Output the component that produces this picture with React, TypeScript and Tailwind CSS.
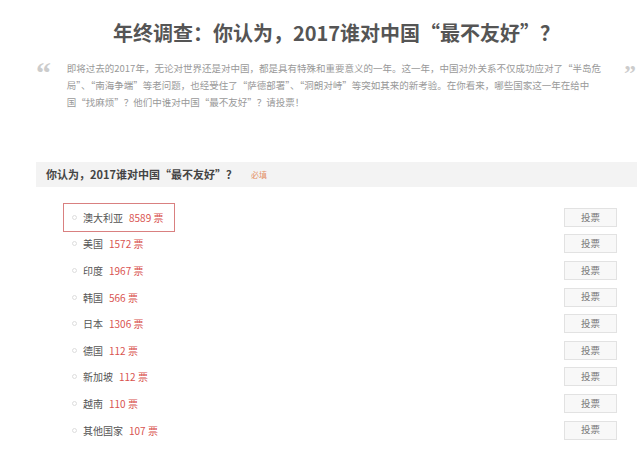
import React from 'react';

type Option = { name: string; votes: number };

const options: Option[] = [
  { name: '澳大利亚', votes: 8589 },
  { name: '美国', votes: 1572 },
  { name: '印度', votes: 1967 },
  { name: '韩国', votes: 566 },
  { name: '日本', votes: 1306 },
  { name: '德国', votes: 112 },
  { name: '新加坡', votes: 112 },
  { name: '越南', votes: 110 },
  { name: '其他国家', votes: 107 },
];

const lines = [
  '即将过去的2017年，无论对世界还是对中国，都是具有特殊和重要意义的一年。这一年，中国对外关系不仅成功应对了“半岛危',
  '局”、“南海争端”等老问题，也经受住了“萨德部署”、“洞朗对峙”等突如其来的新考验。在你看来，哪些国家这一年在给中',
  '国“找麻烦”？他们中谁对中国“最不友好”？请投票！',
];

const App: React.FC = () => {
  return (
    <div
      lang="zh-CN"
      className="w-[637px] h-[456px] bg-white overflow-hidden font-['Noto_Sans_CJK_SC',sans-serif]"
    >
      <div className="pl-[36px]">
        <h1 className="pt-[19px] text-center text-[20px] leading-[28px] font-bold text-[#555]">
          年终调查：你认为，2017谁对中国“最不友好”？
        </h1>

        <div className="flex mt-[11px] h-[104px]">
          <span className="w-[31px] text-[30px] leading-[30px] font-bold text-[#ccc] font-['Liberation_Serif',serif]">
            “
          </span>
          <div className="w-[561px] pt-[2px] text-[9.5px] leading-[17px] text-[#999]">
            {lines.map((l) => (
              <div key={l} className="whitespace-nowrap">
                {l}
              </div>
            ))}
          </div>
          <span className="ml-auto mr-[1px] text-[24px] leading-[30px] font-bold text-[#ccc] font-['Liberation_Serif',serif]">
            ”
          </span>
        </div>

        <div className="h-[25px] bg-[#f3f3f3] flex items-center pl-[10px]">
          <span className="text-[11px] font-bold text-[#444]">你认为，2017谁对中国“最不友好”？</span>
          <span className="ml-[14px] text-[8px] text-[#e39066]">必填</span>
        </div>

        <div className="mt-[17px] pr-[20px]">
          {options.map((o, i) => (
            <div key={o.name} className="h-[26.6px] flex items-center justify-between">
              <div
                className={
                  'ml-[27px] h-[29px] w-[112px] flex items-center pl-[8px] border ' +
                  (i === 0 ? 'border-[#d98080]' : 'border-transparent')
                }
              >
                <span className="w-[5px] h-[5px] rounded-full border border-[#ddd] mr-[6px]" />
                <span className="text-[10px] text-[#555]">{o.name}</span>
                <span className="ml-[6px] text-[10px] text-[#d9534f]">
                  {o.votes} 票
                </span>
              </div>
              <button className="w-[53px] h-[19px] border border-[#e2e2e2] bg-[#f8f8f8] text-[9.5px] text-[#777] leading-none">
                投票
              </button>
            </div>
          ))}
        </div>
      </div>
    </div>
  );
};

export default App;
